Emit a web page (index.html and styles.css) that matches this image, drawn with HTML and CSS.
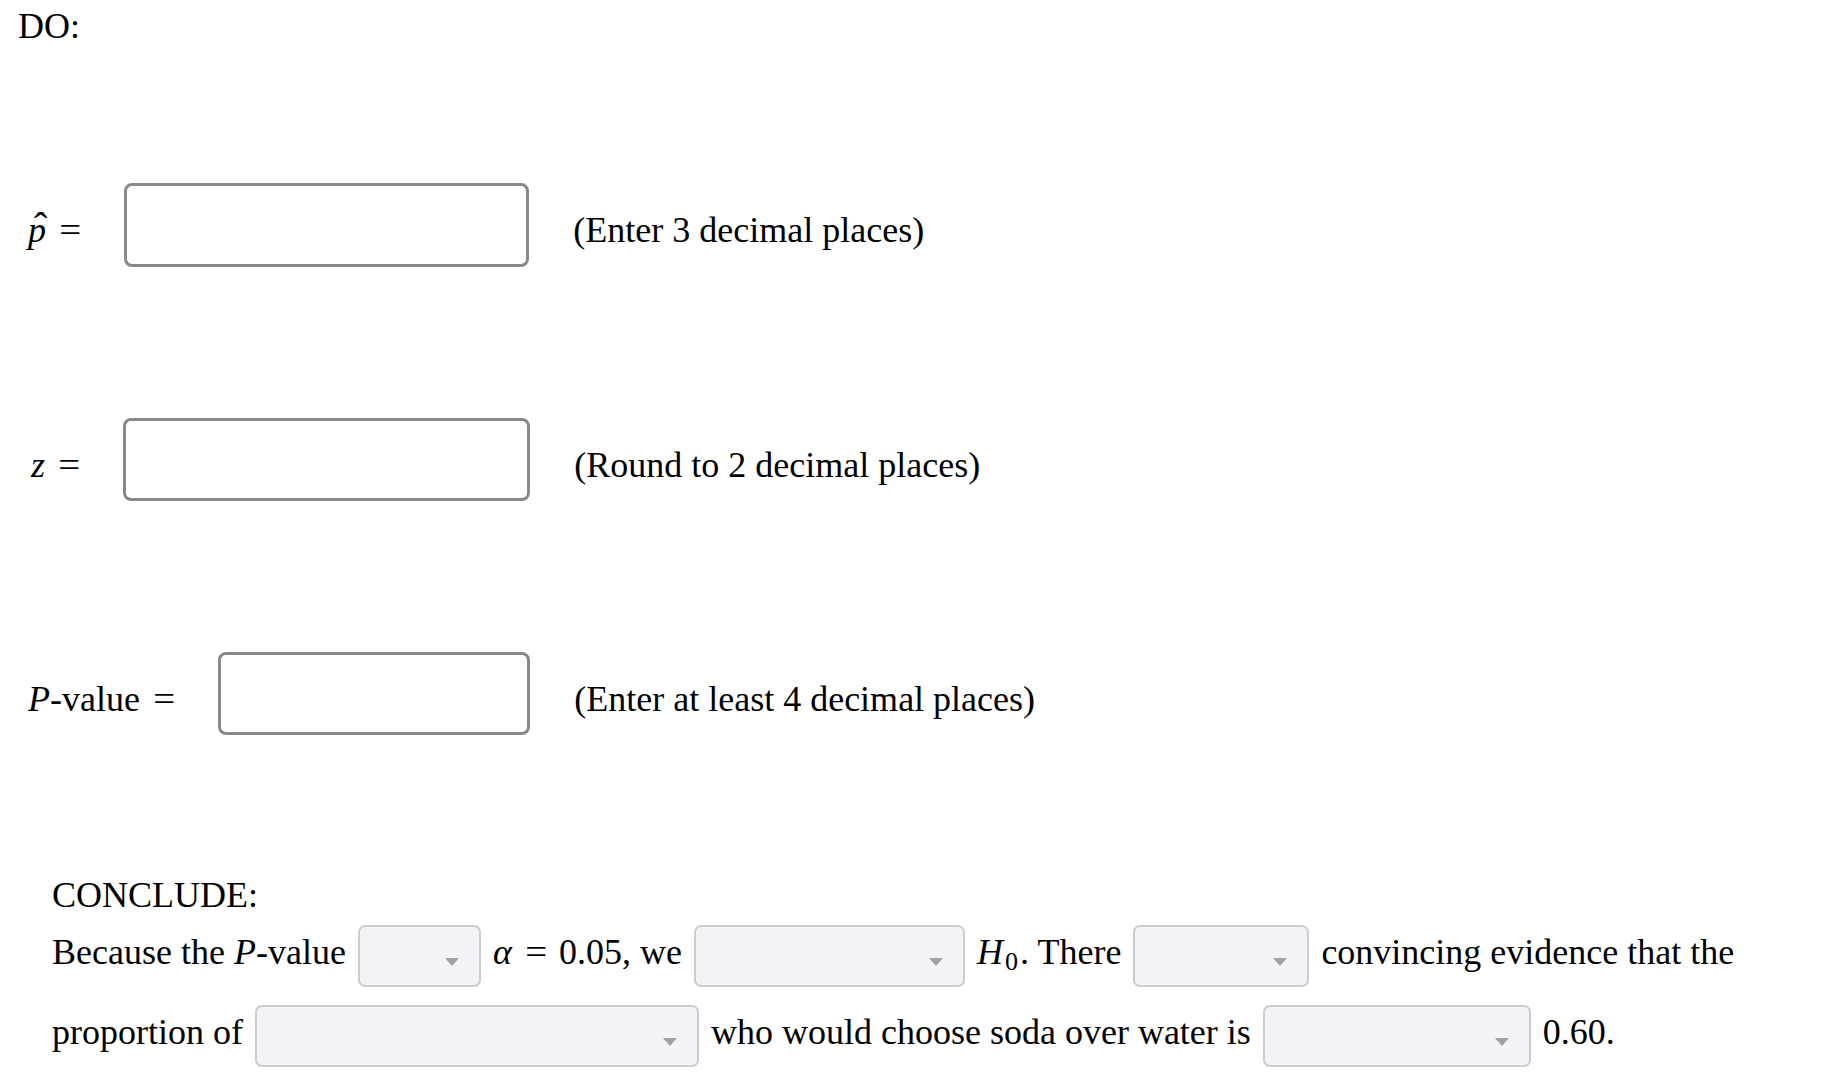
FILE: index.html
```html
<!DOCTYPE html>
<html lang="en">
<head>
<meta charset="utf-8">
<title>DO / CONCLUDE</title>
<link rel="stylesheet" href="styles.css">
</head>
<body>
<div class="page">
  <div class="heading do-heading">DO:</div>

  <div class="answers">
    <div class="answer-row">
      <span class="label"><span class="hatp"><i>p</i></span><span class="eq">=</span></span>
      <span class="field field-phat"></span>
      <span class="hint">(Enter 3 decimal places)</span>
    </div>
    <div class="answer-row row-z">
      <span class="label"><i class="zvar">z</i><span class="eq">=</span></span>
      <span class="field field-z"></span>
      <span class="hint">(Round to 2 decimal places)</span>
    </div>
    <div class="answer-row row-p">
      <span class="label"><i>P</i>-value<span class="eq">=</span></span>
      <span class="field field-p"></span>
      <span class="hint">(Enter at least 4 decimal places)</span>
    </div>
  </div>

  <div class="conclude">
    <div class="heading">CONCLUDE:</div>
    <div class="sentence">
      <span class="txt">Because the <i>P</i>-value</span>
      <span class="dropdown dd-1"><svg class="caret" width="14" height="8" viewBox="0 0 14 8"><path d="M0 0H14L7 8Z"/></svg></span>
      <span class="txt"><i>α</i><span class="rel">=</span>0.05, we</span>
      <span class="dropdown dd-2"><svg class="caret" width="14" height="8" viewBox="0 0 14 8"><path d="M0 0H14L7 8Z"/></svg></span>
      <span class="txt"><i>H</i><sub>0</sub>. There</span>
      <span class="dropdown dd-3"><svg class="caret" width="14" height="8" viewBox="0 0 14 8"><path d="M0 0H14L7 8Z"/></svg></span>
      <span class="txt">convincing evidence that the</span>
    </div>
    <div class="sentence">
      <span class="txt">proportion of</span>
      <span class="dropdown dd-4"><svg class="caret" width="14" height="8" viewBox="0 0 14 8"><path d="M0 0H14L7 8Z"/></svg></span>
      <span class="txt">who would choose soda over water is</span>
      <span class="dropdown dd-5"><svg class="caret" width="14" height="8" viewBox="0 0 14 8"><path d="M0 0H14L7 8Z"/></svg></span>
      <span class="txt">0.60.</span>
    </div>
  </div>
</div>
</body>
</html>
```
FILE: styles.css
```css
html, body {
  margin: 0;
  padding: 0;
  background: #ffffff;
}

body {
  font-family: "Liberation Serif", "Times New Roman", serif;
  font-size: 36px;
  line-height: normal;
  color: #000000;
}

.page {
  padding-top: 5px;
}

.do-heading {
  padding-left: 18px;
}

.answers {
  display: flex;
  flex-direction: column;
  gap: 151px;
  margin-top: 136px;
  padding-left: 28px;
}

.answer-row {
  display: flex;
  align-items: center;
  gap: 44px;
}

.label,
.hint {
  padding-top: 10px;
  white-space: nowrap;
}

.label i {
  font-style: italic;
}

.row-z .label {
  padding-left: 3px;
}

.eq {
  display: inline-block;
  margin-left: 14px;
  transform: scaleX(1.08);
}

.hatp {
  position: relative;
  display: inline-block;
}

.hatp::before {
  content: "\02C6";
  position: absolute;
  left: 6px;
  top: -6px;
  font-size: 40px;
}

.field {
  box-sizing: border-box;
  height: 84px;
  border: 3px solid #888888;
  border-radius: 8px;
  background: #ffffff;
}

.field-phat {
  width: 405px;
}

.field-z {
  width: 407px;
  height: 83px;
}

.field-p {
  width: 312px;
  height: 83px;
}

.conclude {
  margin-top: 139px;
  padding-left: 52px;
}

.sentence {
  display: flex;
  align-items: center;
  gap: 12px;
  margin-top: 9px;
  white-space: nowrap;
}

.sentence + .sentence {
  margin-top: 18px;
}

.txt {
  padding-bottom: 8px;
}

.rel {
  display: inline-block;
  margin: 0 13px 0 14px;
  transform: scaleX(1.08);
}

.txt sub {
  font-size: 26px;
  line-height: 0;
  vertical-align: -6px;
  margin: 0 2px 0 2px;
}

.dropdown {
  box-sizing: border-box;
  display: inline-flex;
  justify-content: flex-end;
  align-items: flex-end;
  height: 62px;
  padding: 0 20px 19px 0;
  border: 2px solid #cdcdcd;
  border-radius: 7px;
  background: #f2f3f7;
}

.caret {
  display: block;
  fill: #a2a2a2;
}

.dd-1 { width: 123px; }
.dd-2 { width: 271px; }
.dd-3 { width: 176px; }
.dd-4 { width: 444px; }
.dd-5 { width: 268px; }
```
